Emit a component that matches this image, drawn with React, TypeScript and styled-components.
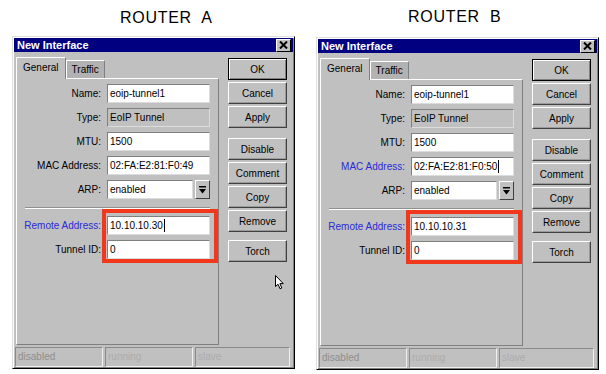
import styled, { createGlobalStyle } from 'styled-components';

const GlobalStyle = createGlobalStyle`
  html, body {
    margin: 0;
    padding: 0;
    background: #fff;
  }
  body {
    font-family: "Liberation Sans", Arial, sans-serif;
  }
`;

// Page holds the two router windows side by side
const Page = styled.div`
  display: flex;
  gap: 21px;
  padding-left: 12px;
  width: 606px;
  height: 374px;
  box-sizing: border-box;
  overflow: hidden;
`;

const Column = styled.div`
  display: flex;
  flex-direction: column;
`;

const Heading = styled.div<{ $indent: number; $top: number; $height: number }>`
  height: ${p => p.$height}px;
  box-sizing: border-box;
  padding: ${p => p.$top}px 0 0 ${p => p.$indent}px;
  font-size: 16px;
  line-height: 18px;
  letter-spacing: 0.7px;
  white-space: pre;
  color: #000;
`;

const Window = styled.div`
  position: relative;
  width: 283px;
  height: 333px;
  box-sizing: border-box;
  padding: 1px;
  background: #c0c0c0;
  border: 1px solid;
  border-color: #dfdfdf #000 #000 #dfdfdf;
  box-shadow: inset 1px 1px #fff, inset -1px -1px #808080;
  display: flex;
  flex-direction: column;
  font-size: 10px;
  color: #000;
`;

const TitleBar = styled.div`
  height: 14px;
  display: flex;
  align-items: center;
  justify-content: space-between;
  padding: 0 2px 0 3px;
  background: #000080;
`;

const TitleText = styled.span`
  color: #fff;
  font-weight: bold;
  font-size: 11px;
  line-height: 14px;
`;

const CloseBox = styled.div`
  width: 15px;
  height: 13px;
  box-sizing: border-box;
  background: #c0c0c0;
  border: 1px solid;
  border-color: #fff #000 #000 #fff;
  display: flex;
  align-items: center;
  justify-content: center;
`;

const Body = styled.div`
  display: flex;
  padding: 5px 0 0 2px;
`;

const LeftCol = styled.div`
  width: 203px;
  display: flex;
  flex-direction: column;
`;

const Tabs = styled.div`
  height: 21px;
  display: flex;
  align-items: flex-end;
  position: relative;
  z-index: 1;
`;

const Tab = styled.div<{ $active?: boolean }>`
  box-sizing: border-box;
  height: ${p => (p.$active ? 22 : 18)}px;
  margin-bottom: ${p => (p.$active ? -1 : 0)}px;
  padding: ${p => (p.$active ? '3px 6px 0' : '2px 5px 0')};
  background: ${p => (p.$active ? '#c0c0c0' : '#b2b2b2')};
  border: 1px solid;
  border-bottom: none;
  border-color: #fff #808080 #808080 #fff;
  line-height: 14px;
`;

const Panel = styled.div`
  position: relative;
  height: 267px;
  box-sizing: border-box;
  border: 1px solid;
  border-color: #fff #808080 #808080 #fff;
  padding: 5px 0 0 4px;
`;

const Form = styled.div`
  display: grid;
  grid-template-columns: 80px 103px;
  grid-template-rows: repeat(5, 19px) 7px 19px 19px;
  column-gap: 6px;
  row-gap: 5px;
`;

const Label = styled.div<{ $blue?: boolean }>`
  display: flex;
  align-items: center;
  justify-content: flex-end;
  white-space: nowrap;
  color: ${p => (p.$blue ? '#2a2ad8' : '#000')};
`;

const Field = styled.div<{ $disabled?: boolean; $width?: number }>`
  box-sizing: border-box;
  height: 19px;
  width: ${p => (p.$width ? `${p.$width}px` : 'auto')};
  padding-left: 2px;
  background: ${p => (p.$disabled ? '#c0c0c0' : '#fff')};
  border: 1px solid;
  border-color: #7f7f7f #dcdcdc #dcdcdc #7f7f7f;
  display: flex;
  align-items: center;
  white-space: nowrap;
`;

const Caret = styled.span`
  display: inline-block;
  width: 1px;
  height: 13px;
  background: #000;
  margin-left: 1px;
`;

const ComboRow = styled.div`
  display: flex;
  gap: 2px;
`;

const DropButton = styled.div`
  width: 15px;
  height: 19px;
  box-sizing: border-box;
  border: 1px solid;
  border-color: #fff #404040 #404040 #fff;
  display: flex;
  align-items: center;
  justify-content: center;
`;

const Separator = styled.div`
  grid-column: 1 / -1;
  align-self: center;
  margin-left: 4px;
  height: 0;
  border-top: 1px solid #909090;
  border-bottom: 1px solid #fff;
`;

const Highlight = styled.div`
  position: absolute;
  left: 85px;
  top: 130px;
  width: 116px;
  height: 54px;
  box-sizing: border-box;
  border: 4px solid #f2381c;
  pointer-events: none;
`;

const ButtonCol = styled.div`
  width: 59px;
  margin-left: 9px;
  padding-top: 1px;
  display: flex;
  flex-direction: column;
`;

const Button = styled.div<{ $gap?: number; $default?: boolean }>`
  height: 22px;
  box-sizing: border-box;
  margin-top: ${p => p.$gap ?? 2}px;
  display: flex;
  align-items: center;
  justify-content: center;
  border: 1px solid;
  border-color: ${p => (p.$default ? '#000' : '#fff #404040 #404040 #fff')};
  box-shadow: ${p =>
    p.$default ? 'inset 1px 1px #fff, inset -1px -1px #808080' : 'inset -1px -1px #9a9a9a'};

  &:first-child {
    margin-top: 0;
  }
`;

const StatusBar = styled.div`
  display: flex;
  gap: 2px;
  margin-top: 2px;
  padding-left: 1px;
`;

const StatusCell = styled.div<{ $width: number; $tone: string }>`
  width: ${p => p.$width}px;
  height: 20px;
  box-sizing: border-box;
  padding-left: 2px;
  border: 1px solid;
  border-color: #8a8a8a #f0f0f0 #f0f0f0 #8a8a8a;
  color: ${p => p.$tone};
  line-height: 18px;
`;

const Pointer = styled.svg`
  position: absolute;
  left: 262px;
  top: 238px;
`;

type RouterProps = {
  title: string;
  indent: number;
  headTop: number;
  headHeight: number;
  mac: string;
  remote: string;
  macEditing?: boolean;
  remoteEditing?: boolean;
  pointer?: boolean;
};

const ArrowDown = () => (
  <svg width="7" height="8" viewBox="0 0 7 8">
    <rect x="0" y="0" width="7" height="1.5" fill="#000" />
    <polygon points="0,3 7,3 3.5,7.5" fill="#000" />
  </svg>
);

const CloseIcon = () => (
  <svg width="9" height="8" viewBox="0 0 9 8">
    <path d="M1 0.5 L8 7.5 M8 0.5 L1 7.5" stroke="#000" strokeWidth="2" />
  </svg>
);

const RouterWindow = ({
  title,
  indent,
  headTop,
  headHeight,
  mac,
  remote,
  macEditing,
  remoteEditing,
  pointer,
}: RouterProps) => (
  <Column>
    <Heading $indent={indent} $top={headTop} $height={headHeight}>
      {title}
    </Heading>
    <Window>
      <TitleBar>
        <TitleText>New Interface</TitleText>
        <CloseBox>
          <CloseIcon />
        </CloseBox>
      </TitleBar>

      <Body>
        <LeftCol>
          <Tabs>
            <Tab $active>General</Tab>
            <Tab>Traffic</Tab>
          </Tabs>
          <Panel>
            <Form>
              <Label>Name:</Label>
              <Field>eoip-tunnel1</Field>

              <Label>Type:</Label>
              <Field $disabled>EoIP Tunnel</Field>

              <Label>MTU:</Label>
              <Field>1500</Field>

              <Label $blue={macEditing}>MAC Address:</Label>
              <Field>
                {mac}
                {macEditing && <Caret />}
              </Field>

              <Label>ARP:</Label>
              <ComboRow>
                <Field $width={86}>enabled</Field>
                <DropButton>
                  <ArrowDown />
                </DropButton>
              </ComboRow>

              <Separator />

              <Label $blue>Remote Address:</Label>
              <Field>
                {remote}
                {remoteEditing && <Caret />}
              </Field>

              <Label>Tunnel ID:</Label>
              <Field>0</Field>
            </Form>
            <Highlight />
          </Panel>
        </LeftCol>

        <ButtonCol>
          <Button $default>OK</Button>
          <Button>Cancel</Button>
          <Button>Apply</Button>
          <Button $gap={10}>Disable</Button>
          <Button>Comment</Button>
          <Button>Copy</Button>
          <Button>Remove</Button>
          <Button $gap={8}>Torch</Button>
        </ButtonCol>
      </Body>

      <StatusBar>
        <StatusCell $width={88} $tone="#8e8e8e">disabled</StatusCell>
        <StatusCell $width={88} $tone="#acacac">running</StatusCell>
        <StatusCell $width={95} $tone="#acacac">slave</StatusCell>
      </StatusBar>

      {pointer && (
        <Pointer width="10" height="15" viewBox="0 0 10 15">
          <path
            d="M0.5 0.5 L0.5 11.5 L3 9.2 L5 13.8 L6.8 13 L4.9 8.6 L8.3 8.6 Z"
            fill="#fff"
            stroke="#000"
            strokeWidth="1"
          />
        </Pointer>
      )}
    </Window>
  </Column>
);

const App = () => (
  <>
    <GlobalStyle />
    <Page>
      <RouterWindow
        title={'ROUTER  A'}
        indent={108}
        headTop={9}
        headHeight={36}
        mac="02:FA:E2:81:F0:49"
        remote="10.10.10.30"
        remoteEditing
        pointer
      />
      <RouterWindow
        title={'ROUTER  B'}
        indent={92}
        headTop={8}
        headHeight={37}
        mac="02:FA:E2:81:F0:50"
        remote="10.10.10.31"
        macEditing
      />
    </Page>
  </>
);

export default App;
